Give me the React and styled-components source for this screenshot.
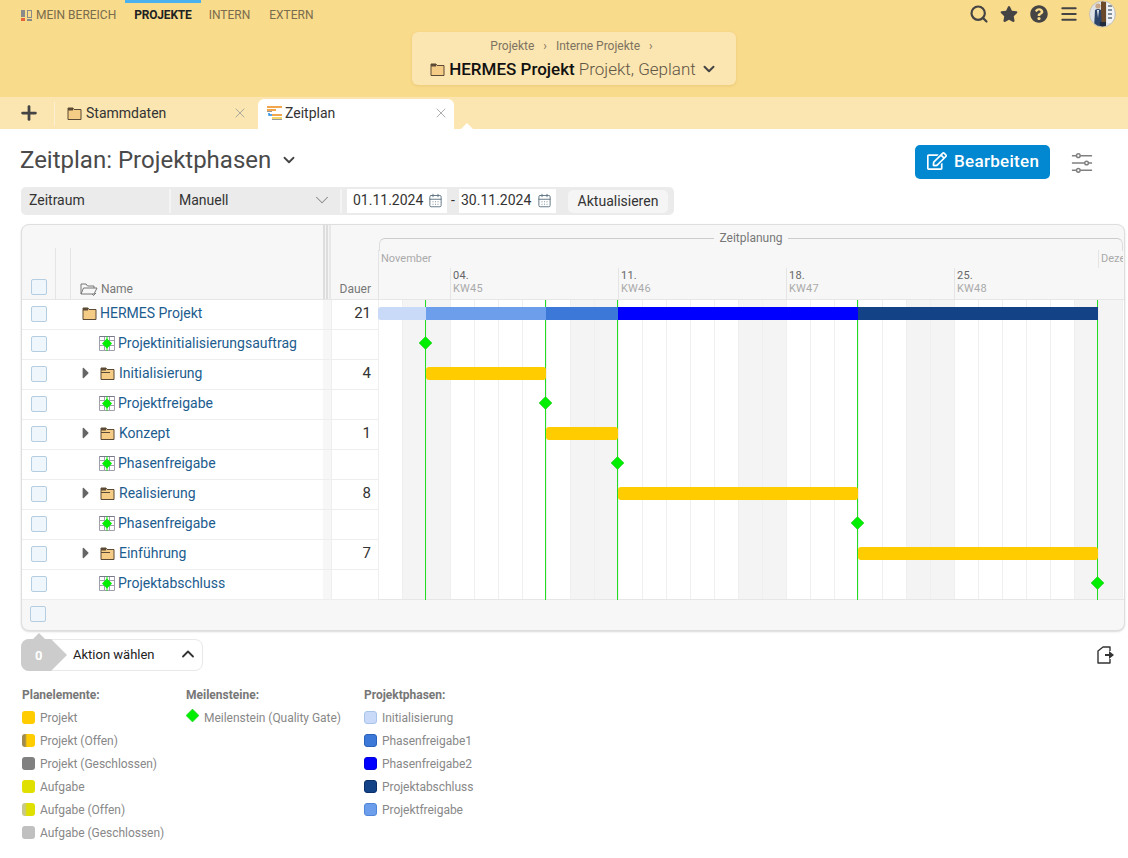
import styled, { createGlobalStyle } from "styled-components";
import { FaStar, FaQuestionCircle, FaRegEdit, FaCaretRight } from "react-icons/fa";
import { Search, Menu, ChevronDown, ChevronUp, Plus, X, CalendarDays } from "lucide-react";

const GlobalStyle = createGlobalStyle`
  html, body { margin: 0; padding: 0; background: #fff; }
  body { font-family: Roboto, "Liberation Sans", sans-serif; color: #333; }
  * { box-sizing: border-box; }
`;

const Page = styled.div`
  width: 1128px;
  height: 858px;
  overflow: hidden;
`;

/* top */
const Header = styled.header`
  height: 97px;
  background: #f9db8c;
`;
const NavRow = styled.div`
  display: flex;
  align-items: flex-start;
  height: 32px;
  padding-left: 21px;
`;
const NavItem = styled.a`
  display: flex;
  align-items: center;
  gap: 4px;
  height: 27px;
  padding: 0 ${(p) => p.$pad ?? 9}px;
  margin-right: ${(p) => p.$mr ?? 0}px;
  border-top: 3px solid ${(p) => (p.$active ? "#4bb0ee" : "transparent")};
  font-size: 12px;
  font-weight: ${(p) => (p.$active ? 700 : 400)};
  letter-spacing: ${(p) => (p.$active ? -0.2 : 0)}px;
  color: ${(p) => (p.$active ? "#222" : "#7a6c4c")};
  white-space: nowrap;
`;
const NavIcons = styled.div`
  display: flex;
  align-items: center;
  margin-left: auto;
  height: 28px;
  padding-right: 12px;
  color: #444;
`;
const IconSlot = styled.span`
  display: flex;
  justify-content: center;
  width: 30px;
`;
const Avatar = styled.svg`
  width: 27px;
  height: 28px;
  margin-left: 5px;
  display: block;
`;
const CrumbCard = styled.div`
  width: 324px;
  height: 53px;
  margin-left: 412px;
  padding-top: 7px;
  background: #fbe5b0;
  border-radius: 6px;
  box-shadow: 0 1px 3px rgba(160, 120, 30, 0.18);
  text-align: center;
`;
const Crumbs = styled.div`
  padding-left: 4px;
  font-size: 12px;
  line-height: 14px;
  color: #7d7361;
  span { margin: 0 9px; }
`;
const CrumbTitle = styled.div`
  display: flex;
  align-items: center;
  justify-content: center;
  gap: 4px;
  margin-top: 5px;
  font-size: 17px;
  font-weight: 300;
  line-height: 22px;
  color: #5f5646;
  b { color: #111; font-weight: 500; }
`;

/* tabs */
const TabBar = styled.div`
  position: relative;
  display: flex;
  align-items: flex-end;
  height: 32px;
  background: #fbe5b0;
`;
const AddTab = styled.div`
  display: flex;
  align-items: center;
  justify-content: center;
  width: 55px;
  height: 32px;
  padding-left: 3px;
  color: #444;
  position: relative;
  &::after {
    content: "";
    position: absolute;
    right: 0;
    top: 5px;
    bottom: 3px;
    border-right: 1px solid #fdf0d0;
  }
`;
const Tab = styled.div`
  display: flex;
  align-items: center;
  width: ${(p) => p.$w}px;
  height: 30px;
  padding: 0 ${(p) => (p.$active ? 5 : 10)}px 2px ${(p) => (p.$active ? 8 : 12)}px;
  gap: ${(p) => (p.$active ? 2 : 4)}px;
  font-size: 14px;
  color: #333;
  background: ${(p) => (p.$active ? "#fff" : "transparent")};
  border-radius: 6px 6px 0 0;
  svg.close { margin-left: auto; color: #999; }
`;
const TabCaret = styled.div`
  position: absolute;
  left: 461px;
  bottom: 0;
  width: 0;
  height: 0;
  border-left: 6px solid transparent;
  border-right: 6px solid transparent;
  border-bottom: 6px solid #fff;
`;

/* title */
const Content = styled.main`
  padding: 16px 3px 0 21px;
`;
const TitleRow = styled.div`
  display: flex;
  align-items: center;
  height: 34px;
`;
const Title = styled.h1`
  margin: -4px 0 0 -1px;
  font-size: 24px;
  font-weight: 400;
  color: #4a4a4a;
`;
const TitleChevron = styled.span`
  display: flex;
  margin: -4px 0 0 9px;
  color: #444;
`;
const EditButton = styled.button`
  display: flex;
  align-items: center;
  gap: 7px;
  width: 135px;
  height: 34px;
  margin-left: auto;
  padding: 0 0 2px 12px;
  border: none;
  border-radius: 5px;
  background: #0288d1;
  color: #fff;
  font: 500 17px Roboto, sans-serif;
  letter-spacing: 0.3px;
`;
const SettingsIcon = styled.svg`
  width: 22px;
  height: 22px;
  margin: 2px 32px 0 21px;
`;

/* filter */
const FilterBar = styled.div`
  display: flex;
  align-items: center;
  width: 653px;
  height: 28px;
  margin-top: 8px;
  background: #ebebeb;
  border-radius: 5px;
  font-size: 14px;
  color: #333;
`;
const FilterCell = styled.div`
  display: flex;
  align-items: center;
  justify-content: space-between;
  width: ${(p) => p.$w}px;
  height: 24px;
  padding: 0 ${(p) => p.$pr ?? 0}px 2px 8px;
  border-right: 2px solid #f4f4f4;
  color: #333;
  svg { color: #888; }
`;
const DateField = styled.div`
  display: flex;
  align-items: center;
  justify-content: space-between;
  width: ${(p) => p.$w}px;
  height: 24px;
  margin-left: ${(p) => p.$ml ?? 0}px;
  padding: 0 4px 2px ${(p) => p.$pl}px;
  background: #fff;
  svg { color: #5f7383; }
`;
const Dash = styled.span`
  width: 12px;
  text-align: center;
  padding-bottom: 2px;
`;
const RefreshButton = styled.button`
  width: 100px;
  height: 23px;
  margin-left: 12px;
  border: none;
  border-radius: 5px;
  background: #f5f5f5;
  font: 400 14px Roboto, sans-serif;
  color: #333;
  padding: 0 0 1px;
`;

/* gantt card */
const Card = styled.section`
  width: 1104px;
  height: 407px;
  margin-top: 9px;
  background: #f7f7f7;
  border: 1px solid #dedede;
  border-radius: 8px;
  box-shadow: 0 1px 2px rgba(0, 0, 0, 0.15);
  overflow: hidden;
`;
const HeadRow = styled.div`
  display: flex;
  height: 75px;
  border-bottom: 1px solid #e6e6e6;
`;
const HeadCheck = styled.div`
  display: flex;
  align-items: flex-end;
  width: 33px;
  padding: 0 0 4px 9px;
`;
const HeadTick = styled.div`
  width: ${(p) => p.$w}px;
  margin-top: 23px;
  border-left: 1px solid #e4e4e4;
`;
const HeadName = styled.div`
  display: flex;
  align-items: flex-end;
  gap: 3px;
  width: 253px;
  margin-top: 23px;
  padding: 0 0 3px 9px;
  border-left: 1px solid #e4e4e4;
  font-size: 12px;
  line-height: 14px;
  color: #777;
`;
const Splitter = styled.div`
  width: 8px;
  flex: none;
  background: ${(p) =>
    p.$head
      ? "linear-gradient(90deg,#ddd 0 2px,#f4f4f4 2px 3px,#ddd 3px 5px,#f4f4f4 5px 6px,#e8e8e8 6px 8px)"
      : "#f7f7f7"};
`;
const HeadDuration = styled.div`
  display: flex;
  align-items: flex-end;
  justify-content: flex-end;
  width: 47px;
  padding: 0 7px 3px 0;
  font-size: 12px;
  line-height: 14px;
  color: #777;
`;
const Timeline = styled.div`
  width: 745px;
  padding-top: 7px;
  overflow: hidden;
`;
const GroupLabel = styled.div`
  display: flex;
  align-items: flex-start;
  gap: 5px;
  height: 18px;
  margin-left: 1px;
  font-size: 12px;
  line-height: 12px;
  color: #777;
  &::before,
  &::after {
    content: "";
    flex: 1;
    height: 12px;
    margin-top: 6px;
    border-top: 1px solid #ccc;
  }
  &::before {
    border-left: 1px solid #ddd;
    border-top-left-radius: 6px;
  }
  &::after {
    border-right: 1px solid #ddd;
    border-top-right-radius: 6px;
  }
`;
const MonthRow = styled.div`
  display: flex;
  height: 18px;
`;
const MonthCell = styled.div`
  width: ${(p) => p.$w}px;
  flex: none;
  padding-left: 2px;
  border-left: 1px solid #e4e4e4;
  font-size: 11px;
  line-height: 17px;
  color: #aaa;
  overflow: hidden;
  white-space: nowrap;
`;
const WeekRow = styled.div`
  display: flex;
  height: 31px;
`;
const WeekCell = styled.div`
  width: ${(p) => p.$w}px;
  flex: none;
  padding: 1px 0 0 2px;
  border-left: 1px solid #e4e4e4;
  font-size: 11px;
  line-height: 13px;
  color: #666;
  letter-spacing: 0.2px;
  small { display: block; font-size: 11px; color: #aaa; }
`;
const Body = styled.div`
  display: flex;
  height: 300px;
  background: #fff;
`;
const RowColumn = styled.div`
  width: 356px;
  flex: none;
`;
const Row = styled.div`
  display: flex;
  height: 30px;
  border-bottom: 1px solid #eee;
`;
const CheckCell = styled.div`
  display: flex;
  align-items: center;
  width: 33px;
  padding: 0 0 2px 9px;
`;
const NameCell = styled.div`
  display: flex;
  align-items: center;
  width: 268px;
  padding: 0 0 3px ${(p) => p.$indent}px;
  gap: ${(p) => p.$gap ?? 4}px;
  font-size: 14px;
  color: #1c5c8e;
  white-space: nowrap;
`;
const DurationCell = styled.div`
  width: 47px;
  padding-right: 7px;
  border-left: 1px solid #eee;
  text-align: right;
  font-size: 15px;
  line-height: 26px;
  color: #333;
`;
const Check = styled.span`
  display: block;
  width: 16px;
  height: 16px;
  background: #eff7fd;
  border: 1px solid #b4cde0;
  border-radius: 2px;
`;
const Expander = styled.span`
  display: flex;
  width: 14px;
  margin: 0 3px 0 -3px;
  color: #666;
`;
const Chart = styled.svg`
  display: block;
  flex: none;
`;
const CardFoot = styled.div`
  display: flex;
  align-items: center;
  height: 30px;
  padding: 0 0 2px 8px;
  border-top: 1px solid #e6e6e6;
  margin-top: -1px;
`;

/* actions */
const ActionRow = styled.div`
  display: flex;
  align-items: center;
  justify-content: space-between;
  height: 32px;
  margin-top: 8px;
  padding-right: 10px;
`;
const ActionBox = styled.div`
  position: relative;
  display: flex;
  align-items: center;
  width: 182px;
  height: 32px;
  padding-bottom: 2px;
  background: #fff;
  border: 1px solid #e8e8e8;
  border-radius: 8px;
  font-size: 13px;
  color: #222;
  &::before {
    content: "";
    position: absolute;
    left: 10px;
    top: -7px;
    border-left: 7px solid transparent;
    border-right: 7px solid transparent;
    border-bottom: 7px solid #ccc;
  }
  svg { margin-left: auto; margin-right: 4px; color: #333; }
`;
const Counter = styled.div`
  display: flex;
  align-items: center;
  width: 46px;
  height: 32px;
  margin: -1px 6px -3px -1px;
  padding-left: 14px;
  background: #ccc;
  clip-path: polygon(0 0, 30px 0, 100% 50%, 30px 100%, 0 100%);
  border-radius: 8px 0 0 8px;
  color: #fff;
  font-weight: 700;
  font-size: 13px;
`;

/* legend */
const Legend = styled.div`
  display: flex;
  margin-top: 16px;
  padding-left: 1px;
`;
const LegendColumn = styled.div`
  width: ${(p) => p.$w}px;
`;
const LegendTitle = styled.div`
  font-size: 12px;
  font-weight: 700;
  line-height: 16px;
  color: #777;
  margin-bottom: 3px;
`;
const LegendItem = styled.div`
  display: flex;
  align-items: center;
  gap: 5px;
  height: 23px;
  font-size: 12px;
  letter-spacing: -0.03px;
  color: #888;
`;
const Swatch = styled.span`
  width: 13px;
  height: 13px;
  border-radius: 3px;
  background: ${(p) => p.$c};
  border: ${(p) => (p.$b ? `1px solid ${p.$b}` : "none")};
`;
const GateMark = styled.svg`
  width: 13px;
  height: 13px;
  margin-top: -4px;
`;

/* drawings */
const Folder = ({ open }) => (
  <svg width="15" height="13" viewBox="0 0 15 13">
    <path d="M1 2.5V1h5l1 1.5h7v10H1z" fill="#f5cc85" stroke="#5b4a35" strokeWidth="1" />
    <rect x="1" y="1" width="5" height="2.5" fill="#5b4a35" />
    {open && <rect x="1" y="5" width="9" height="1" fill="#5b4a35" />}
  </svg>
);

const MilestoneIcon = () => (
  <svg width="16" height="15" viewBox="0 0 16 15">
    <path d="M.5.5h15v14H.5zM.5 4.5h15M.5 9.5h15M5.5.5v14M10.5.5v14" fill="#fff" stroke="#a0a0ac" strokeWidth="1" />
    <path d="M.5.5h15" stroke="#77778a" />
    <path d="M8 0v15" stroke="#1bdc1b" />
    <path d="M8 2.5l5 5l-5 5l-5-5z" fill="#00ee00" />
  </svg>
);

const PlanIcon = () => (
  <svg width="17" height="16" viewBox="0 0 17 16">
    <rect x="1" y="1" width="15" height="2" fill="#f2a64b" />
    <rect x="1" y="4" width="9" height="2" fill="#f2a64b" />
    <rect x="1" y="6" width="5" height="1" fill="#999" />
    <rect x="6" y="9" width="10" height="2" fill="#f2a64b" />
    <rect x="6" y="12" width="10" height="2" fill="#f3d76b" />
    <rect x="6" y="14" width="10" height="1" fill="#999" />
    <path d="M3 8v2h3" fill="none" stroke="#1e88e5" strokeWidth="1.4" />
  </svg>
);

const AreaIcon = () => (
  <svg width="11" height="11" viewBox="0 0 11 11">
    <rect x="0" y="0" width="4" height="7" fill="#8a8a8a" />
    <rect x="0" y="8" width="4" height="3" fill="#e8623a" />
    <rect x="6.5" y=".5" width="4" height="7" fill="none" stroke="#8a8a8a" />
    <rect x="6" y="9" width="5" height="2" fill="#8a8a8a" />
  </svg>
);

const FolderCheckIcon = () => (
  <svg width="18" height="13" viewBox="0 0 18 13" fill="none" stroke="#777" strokeWidth="1">
    <path d="M1 11V1h5l1.5 2H14v2M1 11l2.5-6H17l-3 6H1z" />
    <path d="M12 11l1.5 1.5L16 10" />
  </svg>
);

const ExportIcon = () => (
  <svg width="18" height="18" viewBox="0 0 18 18">
    <path d="M13 5V1H6L1 5v12h12v-4" fill="none" stroke="#333" strokeWidth="1.4" strokeLinejoin="round" />
    <path d="M8 8h4V5l5 4-5 4v-3H8z" fill="#333" />
  </svg>
);

const rows = [
  { name: "HERMES Projekt", type: "root", dur: 21 },
  { name: "Projektinitialisierungsauftrag", type: "ms" },
  { name: "Initialisierung", type: "phase", dur: 4 },
  { name: "Projektfreigabe", type: "ms" },
  { name: "Konzept", type: "phase", dur: 1 },
  { name: "Phasenfreigabe", type: "ms" },
  { name: "Realisierung", type: "phase", dur: 8 },
  { name: "Phasenfreigabe", type: "ms" },
  { name: "Einführung", type: "phase", dur: 7 },
  { name: "Projektabschluss", type: "ms" },
];

// x values are measured from the left edge of the chart, one day is 24px
const DAY = 24;
const weekends = [1, 8, 15, 22, 29];
const summary = [
  { x: 0, w: 54, c: "#c9daf8", r: 3 },
  { x: 48, w: 120, c: "#6d9eeb" },
  { x: 168, w: 72, c: "#3c78d8" },
  { x: 240, w: 240, c: "#0000ff" },
  { x: 480, w: 240, c: "#134287" },
];
const phases = [
  { x: 48, w: 120, row: 2 },
  { x: 168, w: 72, row: 4 },
  { x: 240, w: 240, row: 6 },
  { x: 480, w: 240, row: 8 },
];
const gates = [
  { x: 47.5, row: 1 },
  { x: 167.5, row: 3 },
  { x: 239.5, row: 5 },
  { x: 479.5, row: 7 },
  { x: 719.5, row: 9 },
];

const GanttChart = () => (
  <Chart width="745" height="300" viewBox="0 0 745 300">
    {weekends.map((d) => (
      <rect key={d} x={d * DAY} y="0" width={DAY * 2} height="300" fill="#f4f4f4" />
    ))}
    {Array.from({ length: 32 }, (_, i) => (
      <path key={i} d={`M${i * DAY + 0.5} 0V300`} stroke="#efefef" />
    ))}
    <path d="M0 299.5H745" stroke="#e6e6e6" />
    {gates.map((g) => (
      <path key={g.x} d={`M${g.x} 0V300`} stroke="#22dd22" />
    ))}
    {summary.map((s) => (
      <rect key={s.x} x={s.x} y="7" width={s.w} height="13" fill={s.c} rx={s.r ?? 0} />
    ))}
    {phases.map((p) => (
      <rect key={p.row} x={p.x} y={p.row * 30 + 7} width={p.w} height="13" rx="3" fill="#ffcc00" />
    ))}
    {gates.map((g) => {
      const y = g.row * 30 + 13;
      return (
        <path
          key={g.row}
          d={`M${g.x} ${y - 6.5}l6.5 6.5l-6.5 6.5l-6.5-6.5z`}
          fill="#00ee00"
          stroke="#22c022"
          strokeWidth="0.5"
        />
      );
    })}
  </Chart>
);

const legend = {
  plan: [
    ["Projekt", "#ffcc00"],
    ["Projekt (Offen)", "linear-gradient(90deg,#a08b50 0 3px,#ffcc00 5px)"],
    ["Projekt (Geschlossen)", "#808080"],
    ["Aufgabe", "#e0e000"],
    ["Aufgabe (Offen)", "linear-gradient(90deg,#c8c88c 0 3px,#e0e000 5px)"],
    ["Aufgabe (Geschlossen)", "#c0c0c0"],
  ],
  phases: [
    ["Initialisierung", "#c9daf8", "#a9c4ea"],
    ["Phasenfreigabe1", "#3c78d8", "#2a62bb"],
    ["Phasenfreigabe2", "#0000ff", "#0000dd"],
    ["Projektabschluss", "#134287", "#0b2f68"],
    ["Projektfreigabe", "#6d9eeb", "#4f86d8"],
  ],
};

export default function App() {
  return (
    <Page>
      <GlobalStyle />
      <Header>
        <NavRow>
          <NavItem $pad={0} $mr={9}>
            <AreaIcon />
            MEIN BEREICH
          </NavItem>
          <NavItem $active>PROJEKTE</NavItem>
          <NavItem $pad={8} $mr={2}>INTERN</NavItem>
          <NavItem>EXTERN</NavItem>
          <NavIcons>
            <IconSlot><Search size={20} strokeWidth={2.6} /></IconSlot>
            <IconSlot><FaStar size={18} /></IconSlot>
            <IconSlot><FaQuestionCircle size={18} /></IconSlot>
            <IconSlot><Menu size={20} strokeWidth={2.4} /></IconSlot>
            <Avatar viewBox="0 0 27 28">
              <defs>
                <clipPath id="av"><circle cx="13.5" cy="14" r="13" /></clipPath>
              </defs>
              <g clipPath="url(#av)">
                <rect width="27" height="28" fill="#dfe3e6" />
                <rect x="12" width="5" height="28" fill="#6a4a2a" />
                <rect x="18" y="3" width="7" height="20" fill="#f1f3f4" />
                <path d="M19 6h4M19 10h4M19 14h4M19 18h4" stroke="#60707c" strokeWidth="1.5" />
                <circle cx="9" cy="6" r="2.6" fill="#c9a58a" />
                <path d="M5 28l1-18q3-2 6 0l1 18z" fill="#2c4467" />
                <path d="M8 10h2l-1 8z" fill="#e8eef2" />
                <rect x="11" y="22" width="6" height="6" fill="#1f2b3d" />
              </g>
              <circle cx="13.5" cy="14" r="13" fill="none" stroke="#c8c2b0" />
            </Avatar>
          </NavIcons>
        </NavRow>
        <CrumbCard>
          <Crumbs>
            Projekte<span>›</span>Interne Projekte<span>›</span>
          </Crumbs>
          <CrumbTitle>
            <Folder />
            <b>HERMES Projekt</b> Projekt, Geplant
            <ChevronDown size={18} strokeWidth={2.6} color="#444" />
          </CrumbTitle>
        </CrumbCard>
      </Header>

      <TabBar>
        <AddTab><Plus size={22} strokeWidth={3} /></AddTab>
        <Tab $w={203}>
          <Folder />
          Stammdaten
          <X className="close" size={16} strokeWidth={1.2} />
        </Tab>
        <Tab $w={196} $active>
          <PlanIcon />
          Zeitplan
          <X className="close" size={16} strokeWidth={1.2} />
        </Tab>
        <TabCaret />
      </TabBar>

      <Content>
        <TitleRow>
          <Title>Zeitplan: Projektphasen</Title>
          <TitleChevron><ChevronDown size={18} strokeWidth={2.4} /></TitleChevron>
          <EditButton>
            <FaRegEdit size={20} />
            Bearbeiten
          </EditButton>
          <SettingsIcon viewBox="0 0 24 24" fill="none" stroke="#808080" strokeWidth="1.6">
            <path d="M1 4h5M10 4h13M1 12h14M19 12h4M1 20h5M10 20h13" />
            <circle cx="8" cy="4" r="2" />
            <circle cx="17" cy="12" r="2" />
            <circle cx="8" cy="20" r="2" />
          </SettingsIcon>
        </TitleRow>

        <FilterBar>
          <FilterCell $w={150}>Zeitraum</FilterCell>
          <FilterCell $w={171} $pr={7}>
            Manuell
            <ChevronDown size={22} strokeWidth={1.1} />
          </FilterCell>
          <DateField $w={100} $ml={5} $pl={6}>
            01.11.2024
            <CalendarDays size={15} strokeWidth={1.5} />
          </DateField>
          <Dash>-</Dash>
          <DateField $w={97} $pl={2}>
            30.11.2024
            <CalendarDays size={15} strokeWidth={1.5} />
          </DateField>
          <RefreshButton>Aktualisieren</RefreshButton>
        </FilterBar>

        <Card>
          <HeadRow>
            <HeadCheck><Check /></HeadCheck>
            <HeadTick $w={15} />
            <HeadName>
              <FolderCheckIcon />
              Name
            </HeadName>
            <Splitter $head />
            <HeadDuration>Dauer</HeadDuration>
            <Timeline>
              <GroupLabel>Zeitplanung</GroupLabel>
              <MonthRow>
                <MonthCell $w={720}>November</MonthCell>
                <MonthCell $w={25}>Dezember</MonthCell>
              </MonthRow>
              <WeekRow>
                <WeekCell $w={72} />
                <WeekCell $w={168}>04.<small>KW45</small></WeekCell>
                <WeekCell $w={168}>11.<small>KW46</small></WeekCell>
                <WeekCell $w={168}>18.<small>KW47</small></WeekCell>
                <WeekCell $w={169}>25.<small>KW48</small></WeekCell>
              </WeekRow>
            </Timeline>
          </HeadRow>
          <Body>
            <RowColumn>
              {rows.map((r, i) => (
                <Row key={i}>
                  <CheckCell><Check /></CheckCell>
                  {r.type === "root" && (
                    <NameCell $indent={27} $gap={3}><Folder />{r.name}</NameCell>
                  )}
                  {r.type === "ms" && (
                    <NameCell $indent={44} $gap={3}><MilestoneIcon />{r.name}</NameCell>
                  )}
                  {r.type === "phase" && (
                    <NameCell $indent={27} $gap={4}>
                      <Expander><FaCaretRight size={18} /></Expander>
                      <Folder open />
                      {r.name}
                    </NameCell>
                  )}
                  <Splitter />
                  <DurationCell>{r.dur}</DurationCell>
                </Row>
              ))}
            </RowColumn>
            <GanttChart />
          </Body>
          <CardFoot><Check /></CardFoot>
        </Card>

        <ActionRow>
          <ActionBox>
            <Counter>0</Counter>
            Aktion wählen
            <ChevronUp size={20} strokeWidth={2.2} />
          </ActionBox>
          <ExportIcon />
        </ActionRow>

        <Legend>
          <LegendColumn $w={164}>
            <LegendTitle>Planelemente:</LegendTitle>
            {legend.plan.map(([label, c]) => (
              <LegendItem key={label}><Swatch $c={c} />{label}</LegendItem>
            ))}
          </LegendColumn>
          <LegendColumn $w={178}>
            <LegendTitle>Meilensteine:</LegendTitle>
            <LegendItem>
              <GateMark viewBox="0 0 13 13">
                <path d="M6.5 0L13 6.5L6.5 13L0 6.5z" fill="#00ee00" stroke="#22c022" strokeWidth="0.5" />
              </GateMark>
              Meilenstein (Quality Gate)
            </LegendItem>
          </LegendColumn>
          <LegendColumn $w={200}>
            <LegendTitle>Projektphasen:</LegendTitle>
            {legend.phases.map(([label, c, b]) => (
              <LegendItem key={label}><Swatch $c={c} $b={b} />{label}</LegendItem>
            ))}
          </LegendColumn>
        </Legend>
      </Content>
    </Page>
  );
}
